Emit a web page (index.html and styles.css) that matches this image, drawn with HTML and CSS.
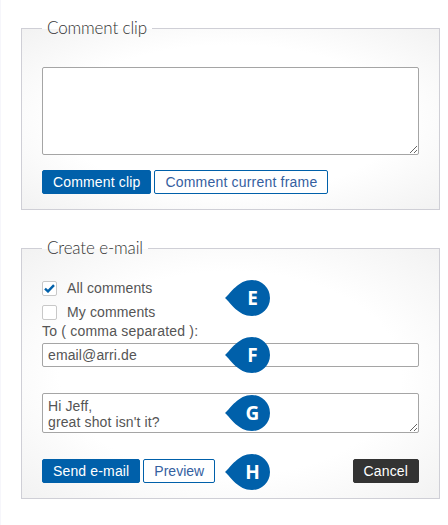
FILE: index.html
```html
<!DOCTYPE html>
<html lang="en">
<head>
    <meta charset="UTF-8">
    <meta name="viewport" content="width=device-width, initial-scale=1.0">
    <title>Comments</title>
    <link rel="stylesheet" href="styles.css">
</head>
<body>
    <div class="container">
        <fieldset class="panel panel-comment">
            <legend>Comment clip</legend>
            <textarea class="comment-text"></textarea>
            <div class="actions">
                <button type="button" class="btn btn-primary">Comment clip</button>
                <button type="button" class="btn btn-outline btn-frame">Comment current frame</button>
            </div>
        </fieldset>

        <fieldset class="panel panel-email">
            <legend>Create e-mail</legend>
            <div class="check-row">
                <span class="check-box">
                    <svg width="11" height="9" viewBox="0 0 11 9"><path d="M1 4.6 L4 7.4 L10 1.2" fill="none" stroke="#0060aa" stroke-width="2.4"/></svg>
                </span>
                <span>All comments</span>
            </div>
            <div class="check-row">
                <span class="check-box"></span>
                <span>My comments</span>
            </div>
            <label class="to-label" for="to">To ( comma separated ):</label>
            <input class="to-input" id="to" type="text" value="email@arri.de">
            <textarea class="mail-text">Hi Jeff,
great shot isn't it?</textarea>
            <div class="actions">
                <button type="button" class="btn btn-primary">Send e-mail</button>
                <button type="button" class="btn btn-outline btn-preview">Preview</button>
                <button type="button" class="btn btn-dark">Cancel</button>
            </div>

            <div class="badge badge-e">
                <svg width="45" height="36" viewBox="0 0 45 36"><path d="M0 18 C6 13 13 0 27 0 A18 18 0 0 1 27 36 C13 36 6 23 0 18 Z" fill="#0060aa"/></svg>
                <span>E</span>
            </div>
            <div class="badge badge-f">
                <svg width="45" height="36" viewBox="0 0 45 36"><path d="M0 18 C6 13 13 0 27 0 A18 18 0 0 1 27 36 C13 36 6 23 0 18 Z" fill="#0060aa"/></svg>
                <span>F</span>
            </div>
            <div class="badge badge-g">
                <svg width="45" height="36" viewBox="0 0 45 36"><path d="M0 18 C6 13 13 0 27 0 A18 18 0 0 1 27 36 C13 36 6 23 0 18 Z" fill="#0060aa"/></svg>
                <span>G</span>
            </div>
            <div class="badge badge-h">
                <svg width="45" height="36" viewBox="0 0 45 36"><path d="M0 18 C6 13 13 0 27 0 A18 18 0 0 1 27 36 C13 36 6 23 0 18 Z" fill="#0060aa"/></svg>
                <span>H</span>
            </div>
        </fieldset>
    </div>
</body>
</html>
```

FILE: styles.css
```css
body {
    font-family: "Liberation Sans", Arial, sans-serif;
    font-size: 14px;
    letter-spacing: 0.12px;
    color: #555;
    background-color: #fff;
    margin: 0;
    padding: 0;
}

.container {
    height: 525px;
    box-sizing: border-box;
    padding: 18px 8px 0 20px;
    border-left: 1px solid #f6f6fb;
    overflow: hidden;
}

.panel {
    position: relative;
    margin: 0;
    padding: 0 20px;
    border: 1px solid #cfcfd6;
    background: radial-gradient(ellipse at center, #fff 58%, #f2f2f2 100%);
    min-width: 0;
}

.panel legend {
    margin-left: 0;
    padding: 0 5px;
    font-family: "Lato", "Open Sans", sans-serif;
    font-weight: 300;
    font-size: 17px;
    letter-spacing: -0.15px;
    line-height: 20px;
    color: #333;
}

.panel-comment {
    height: 190px;
}

.panel-email {
    margin-top: 28px;
}

textarea, .to-input {
    display: block;
    box-sizing: border-box;
    width: 377px;
    margin: 0;
    padding: 2px 5px;
    border: 1px solid #a5a5a5;
    border-radius: 2px;
    background: #fff;
    font-family: "Liberation Sans", Arial, sans-serif;
    font-size: 14px;
    letter-spacing: 0.12px;
    color: #555;
    outline: none;
}

.comment-text {
    height: 88px;
    margin-top: 29px;
}

.actions {
    display: flex;
    gap: 3px;
    margin-top: 15px;
}

.btn {
    height: 24px;
    box-sizing: border-box;
    margin: 0;
    padding: 0 10px;
    border: 1px solid #0060aa;
    border-radius: 2px;
    font-family: "Liberation Sans", Arial, sans-serif;
    font-size: 14px;
    letter-spacing: 0.15px;
    line-height: 20px;
    cursor: pointer;
}

.btn-primary {
    background-color: #0060aa;
    color: #fff;
}

.btn-outline {
    background-color: #fff;
    color: #35609f;
}

.btn-frame {
    letter-spacing: 0.2px;
}

.btn-preview {
    letter-spacing: 0;
}

.btn-dark {
    margin-left: auto;
    background-color: #333;
    border-color: #333;
    color: #fff;
}

.check-row {
    display: flex;
    align-items: center;
    gap: 10px;
    height: 16px;
    margin-bottom: 8px;
    line-height: 16px;
}

.check-row:first-of-type {
    margin-top: 22px;
}

.check-box {
    display: flex;
    align-items: center;
    justify-content: center;
    width: 15px;
    height: 15px;
    box-sizing: border-box;
    border: 1px solid #c8c8c8;
    border-radius: 2px;
    background: #fff;
}

.to-label {
    display: block;
    margin-top: -5px;
    line-height: 16px;
    letter-spacing: 0.2px;
}

.to-input {
    height: 24px;
    margin-top: 4px;
}

.mail-text {
    height: 40px;
    margin-top: 26px;
    padding-top: 4px;
    line-height: 16px;
}

.panel-email .actions {
    margin-top: 26px;
    margin-bottom: 15px;
}

/* callout markers sit over the form */
.badge {
    position: absolute;
    left: 203px;
    width: 45px;
    height: 36px;
}

.badge svg {
    display: block;
}

.badge span {
    position: absolute;
    left: 10px;
    right: 0;
    top: 0;
    text-align: center;
    font-family: "Open Sans", sans-serif;
    font-weight: 700;
    font-size: 19px;
    letter-spacing: 0;
    line-height: 36px;
    color: #fff;
}

.badge-e { top: 22px; }
.badge-f { top: 79px; }
.badge-g { top: 137px; }
.badge-h { top: 196px; }
```
